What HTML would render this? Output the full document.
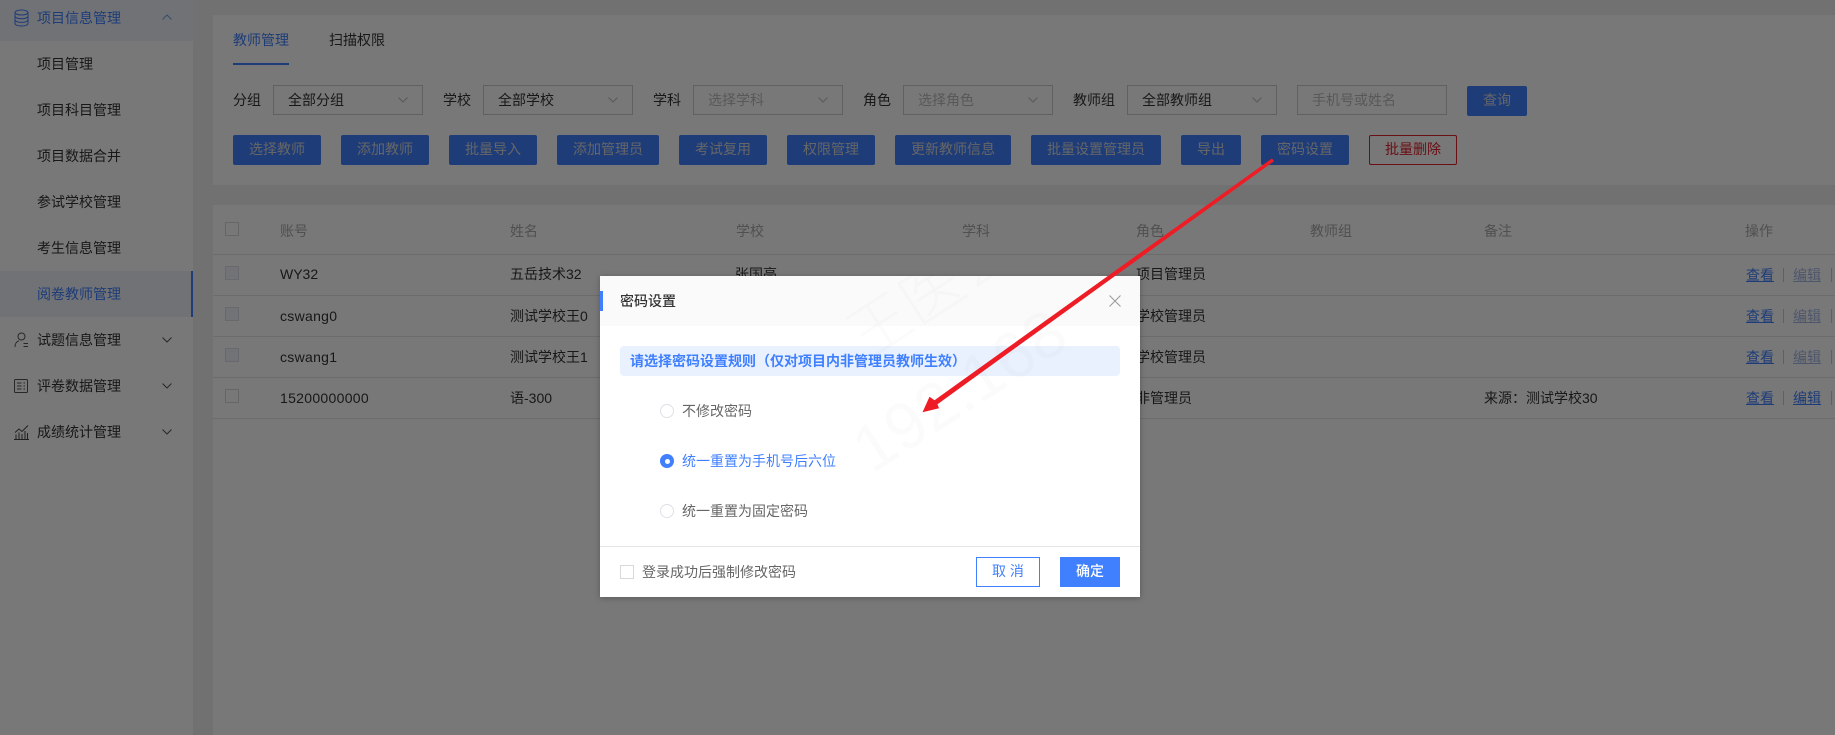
<!DOCTYPE html>
<html lang="zh-CN">
<head>
<meta charset="utf-8">
<title>密码设置</title>
<style>
html,body{margin:0;padding:0}
body{width:1835px;height:735px;overflow:hidden;position:relative;background:#f0f0f0;font-family:"Liberation Sans","Noto Sans CJK SC",sans-serif;font-size:14px;color:#333}
.a,.t,.b,.s,.cb{position:absolute}
.t{line-height:20px;white-space:nowrap}
.side{left:0;top:0;width:193px;height:735px;background:#fff}
.blue{color:#4080ff}
.hd{color:#aaa}
.b{height:30px;top:135px;line-height:29px;text-align:center;background:#4080ff;color:#d8d8d8;border-radius:2px}
.s{top:85px;width:148px;height:28px;border:1px solid #ccc;background:#fff;line-height:28px;text-indent:14px;white-space:nowrap}
.s svg{position:absolute;right:14px;top:11px}
.ph{color:#bbb}
.cb{width:12px;height:12px;border:1px solid #d9d9d9;background:#fff}
.cb.d{background:#f3f5fb;border-color:#dde0e8}
.lk{color:#4080ff;text-decoration:underline}
.f{color:#a5b8e4}
.sep{position:absolute;width:1px;height:14px;background:#ccc}
.line{position:absolute;left:213px;width:1622px;height:1px;background:#e6e6e6}
.ls{letter-spacing:.3px}
.mask{position:absolute;left:0;top:0;width:1835px;height:735px;background:rgba(0,0,0,.53)}
.modal{position:absolute;left:600px;top:276px;width:540px;height:321px;background:#fff;box-shadow:0 1px 6px rgba(0,0,0,.25);overflow:hidden}
.modal .t{color:#666}
.modal .t.blue{color:#4080ff}
.modal .t.ti{color:#333;font-weight:500}
.rd{position:absolute;left:60px;width:12px;height:12px;border:1px solid #e0e0e8;border-radius:50%;background:#fff}
.wm{position:absolute;white-space:nowrap;color:rgba(0,0,0,.014);font-weight:300;transform-origin:0 100%;pointer-events:none}
svg{display:block}
</style>
</head>
<body>

<!-- sidebar -->
<div class="a side"></div>
<div class="a" style="left:0;top:0;width:193px;height:41px;background:#eef2fb"></div>
<svg class="a" style="left:13px;top:9px" width="17" height="18" viewBox="0 0 17 18" fill="none" stroke="#4080ff" stroke-width="1"><ellipse cx="8.500" cy="3.500" rx="6.500" ry="2.500"/><path d="M2 3.500V14.500C2 16 5 17 8.500 17S15 16 15 14.500V3.500M2 7.200C2 8.600 5 9.700 8.500 9.700S15 8.600 15 7.200M2 10.900C2 12.300 5 13.400 8.500 13.400S15 12.300 15 10.900"/></svg>
<div class="t blue" style="left:37px;top:8px">项目信息管理</div>
<svg class="a" style="left:162px;top:14px" width="10" height="6" viewBox="0 0 10 6" fill="none" stroke="#7a9fe8"><path d="M.5 5.500 5 1l4.500 4.500"/></svg>

<div class="t" style="left:37px;top:54px">项目管理</div>
<div class="t" style="left:37px;top:100px">项目科目管理</div>
<div class="t" style="left:37px;top:146px">项目数据合并</div>
<div class="t" style="left:37px;top:192px">参试学校管理</div>
<div class="t" style="left:37px;top:238px">考生信息管理</div>
<div class="a" style="left:0;top:271px;width:193px;height:46px;background:#eef2fb"></div>
<div class="a" style="left:191px;top:271px;width:2px;height:46px;background:#4080ff"></div>
<div class="t blue" style="left:37px;top:284px">阅卷教师管理</div>

<svg class="a" style="left:14px;top:332px" width="15" height="16" viewBox="0 0 15 16" fill="none" stroke="#555" stroke-width="1"><circle cx="7.500" cy="4.500" r="3.500"/><path d="M1 15C1 11.500 2.800 9.500 5 8.800M9.500 11.500H14M9.500 14.500H14"/></svg>
<div class="t" style="left:37px;top:330px">试题信息管理</div>
<svg class="a" style="left:162px;top:337px" width="10" height="6" viewBox="0 0 10 6" fill="none" stroke="#555"><path d="M.5.500 5 5 9.500.500"/></svg>

<svg class="a" style="left:14px;top:379px" width="14" height="14" viewBox="0 0 14 14" fill="none" stroke="#555" stroke-width="1"><rect x=".5" y=".5" width="13" height="13" rx="1"/><path d="M3 4H7.500M3 7H7.500M3 10H7.500M9.500 4H11M9.500 7H11M9.500 10H11"/></svg>
<div class="t" style="left:37px;top:376px">评卷数据管理</div>
<svg class="a" style="left:162px;top:383px" width="10" height="6" viewBox="0 0 10 6" fill="none" stroke="#555"><path d="M.5.500 5 5 9.500.500"/></svg>

<svg class="a" style="left:14px;top:425px" width="15" height="15" viewBox="0 0 15 15" fill="none" stroke="#444" stroke-width="1"><path d="M0 14.500H15M2 14V9.500M5 14V7.500M8 14V9M11 14V6M13.500 14V8M1 7.500 5 4 8 6.500 14 .5"/></svg>
<div class="t" style="left:37px;top:422px">成绩统计管理</div>
<svg class="a" style="left:162px;top:429px" width="10" height="6" viewBox="0 0 10 6" fill="none" stroke="#555"><path d="M.5.500 5 5 9.500.500"/></svg>

<!-- filter panel -->
<div class="a" style="left:213px;top:15px;width:1622px;height:170px;background:#fff"></div>
<div class="t blue" style="left:233px;top:30px">教师管理</div>
<div class="a" style="left:233px;top:63px;width:56px;height:2px;background:#4080ff"></div>
<div class="t" style="left:329px;top:30px">扫描权限</div>

<div class="t" style="left:233px;top:90px">分组</div>
<div class="s" style="left:273px">全部分组<svg width="10" height="6" viewBox="0 0 10 6" fill="none" stroke="#bbb"><path d="M.5.500 5 5 9.500.500"/></svg></div>
<div class="t" style="left:443px;top:90px">学校</div>
<div class="s" style="left:483px">全部学校<svg width="10" height="6" viewBox="0 0 10 6" fill="none" stroke="#bbb"><path d="M.5.500 5 5 9.500.500"/></svg></div>
<div class="t" style="left:653px;top:90px">学科</div>
<div class="s ph" style="left:693px">选择学科<svg width="10" height="6" viewBox="0 0 10 6" fill="none" stroke="#bbb"><path d="M.5.500 5 5 9.500.500"/></svg></div>
<div class="t" style="left:863px;top:90px">角色</div>
<div class="s ph" style="left:903px">选择角色<svg width="10" height="6" viewBox="0 0 10 6" fill="none" stroke="#bbb"><path d="M.5.500 5 5 9.500.500"/></svg></div>
<div class="t" style="left:1073px;top:90px">教师组</div>
<div class="s" style="left:1127px">全部教师组<svg width="10" height="6" viewBox="0 0 10 6" fill="none" stroke="#bbb"><path d="M.5.500 5 5 9.500.500"/></svg></div>
<div class="s ph" style="left:1297px">手机号或姓名</div>
<div class="b" style="left:1467px;top:86px;width:60px">查询</div>

<div class="b" style="left:233px;width:88px">选择教师</div>
<div class="b" style="left:341px;width:88px">添加教师</div>
<div class="b" style="left:449px;width:88px">批量导入</div>
<div class="b" style="left:557px;width:102px">添加管理员</div>
<div class="b" style="left:679px;width:88px">考试复用</div>
<div class="b" style="left:787px;width:88px">权限管理</div>
<div class="b" style="left:895px;width:116px">更新教师信息</div>
<div class="b" style="left:1031px;width:130px">批量设置管理员</div>
<div class="b" style="left:1181px;width:60px">导出</div>
<div class="b" style="left:1261px;width:88px">密码设置</div>
<div class="b" style="left:1369px;width:86px;height:28px;line-height:27px;background:#fff;border:1px solid #e1202c;color:#e1202c">批量删除</div>

<!-- table -->
<div class="a" style="left:213px;top:205px;width:1622px;height:530px;background:#fff"></div>
<div class="cb" style="left:225px;top:222px"></div>
<div class="t hd" style="left:280px;top:221px">账号</div>
<div class="t hd" style="left:510px;top:221px">姓名</div>
<div class="t hd" style="left:736px;top:221px">学校</div>
<div class="t hd" style="left:962px;top:221px">学科</div>
<div class="t hd" style="left:1136px;top:221px">角色</div>
<div class="t hd" style="left:1310px;top:221px">教师组</div>
<div class="t hd" style="left:1484px;top:221px">备注</div>
<div class="t hd" style="left:1745px;top:221px">操作</div>

<div class="line" style="top:254px"></div>
<div class="line" style="top:295px"></div>
<div class="line" style="top:336px"></div>
<div class="line" style="top:377px"></div>
<div class="line" style="top:418px"></div>

<div class="cb d" style="left:225px;top:266px"></div>
<div class="t" style="left:280px;top:264px">WY32</div>
<div class="t" style="left:510px;top:264px">五岳技术32</div>
<div class="t" style="left:735px;top:264px">张国亮</div>
<div class="t" style="left:1136px;top:264px">项目管理员</div>
<div class="t lk" style="left:1746px;top:265px">查看</div><div class="sep" style="left:1783px;top:268px"></div>
<div class="t lk f" style="left:1793px;top:265px">编辑</div><div class="sep" style="left:1831px;top:268px"></div>

<div class="cb d" style="left:225px;top:307px"></div>
<div class="t ls" style="left:280px;top:306px">cswang0</div>
<div class="t" style="left:510px;top:306px">测试学校王0</div>
<div class="t" style="left:1136px;top:306px">学校管理员</div>
<div class="t lk" style="left:1746px;top:306px">查看</div><div class="sep" style="left:1783px;top:309px"></div>
<div class="t lk f" style="left:1793px;top:306px">编辑</div><div class="sep" style="left:1831px;top:309px"></div>

<div class="cb d" style="left:225px;top:348px"></div>
<div class="t ls" style="left:280px;top:347px">cswang1</div>
<div class="t" style="left:510px;top:347px">测试学校王1</div>
<div class="t" style="left:1136px;top:347px">学校管理员</div>
<div class="t lk" style="left:1746px;top:347px">查看</div><div class="sep" style="left:1783px;top:350px"></div>
<div class="t lk f" style="left:1793px;top:347px">编辑</div><div class="sep" style="left:1831px;top:350px"></div>

<div class="cb" style="left:225px;top:389px"></div>
<div class="t ls" style="left:280px;top:388px">15200000000</div>
<div class="t" style="left:510px;top:388px">语-300</div>
<div class="t" style="left:1136px;top:388px">非管理员</div>
<div class="t" style="left:1484px;top:388px">来源：测试学校30</div>
<div class="t lk" style="left:1746px;top:388px">查看</div><div class="sep" style="left:1783px;top:391px"></div>
<div class="t lk" style="left:1793px;top:388px">编辑</div><div class="sep" style="left:1831px;top:391px"></div>

<div class="mask"></div>

<!-- modal -->
<div class="modal">
  <div class="a" style="left:0;top:0;width:540px;height:50px;background:#fafafa"></div>
  <div class="a" style="left:0;top:15px;width:3px;height:20px;background:#4080ff"></div>
  <div class="t ti" style="left:20px;top:15px">密码设置</div>
  <svg class="a" style="left:509px;top:19px" width="12" height="12" viewBox="0 0 12 12" fill="none" stroke="#999"><path d="M.5.500 11.500 11.500M11.500.500 .5 11.500"/></svg>

  <div class="a" style="left:20px;top:70px;width:500px;height:30px;background:#e9f1ff;border-radius:4px"></div>
  <div class="t blue" style="left:30px;top:75px;font-weight:700">请选择密码设置规则（仅对项目内非管理员教师生效）</div>

  <div class="rd" style="top:128px"></div>
  <div class="t" style="left:82px;top:125px">不修改密码</div>
  <div class="rd" style="top:178px;background:#4080ff;border-color:#4080ff"></div>
  <div class="a" style="left:64.500px;top:182.500px;width:5px;height:5px;border-radius:50%;background:#fff"></div>
  <div class="t blue" style="left:82px;top:175px">统一重置为手机号后六位</div>
  <div class="rd" style="top:228px"></div>
  <div class="t" style="left:82px;top:225px">统一重置为固定密码</div>

  <div class="a" style="left:0;top:270px;width:540px;height:1px;background:#e6e6e6"></div>
  <div class="cb" style="left:20px;top:289px"></div>
  <div class="t" style="left:42px;top:286px">登录成功后强制修改密码</div>
  <div class="a blue" style="left:376px;top:281px;width:62px;height:28px;line-height:27px;border:1px solid #4080ff;text-align:center">取 消</div>
  <div class="a" style="left:460px;top:281px;width:60px;height:30px;line-height:29px;background:#4080ff;color:#fff;text-align:center;font-weight:500">确定</div>

  <!-- watermark (clipped to the dialog) -->
  <div class="wm" style="left:280px;top:136px;font-size:66px;line-height:75px;transform:rotate(-33deg)">192.168</div>
  <div class="wm" style="left:275px;top:24px;font-size:62px;line-height:75px;transform:rotate(-33deg)">王医公司</div>
</div>

<!-- annotation arrow -->
<svg class="a" style="left:0;top:0" width="1835" height="735" viewBox="0 0 1835 735"><polygon fill="#ee1c25" points="1274,161.200 1272,158.400 934.500,400.200 929.500,396.800 922.500,412.300 939,408.300 937.500,404.200"/></svg>

</body>
</html>
